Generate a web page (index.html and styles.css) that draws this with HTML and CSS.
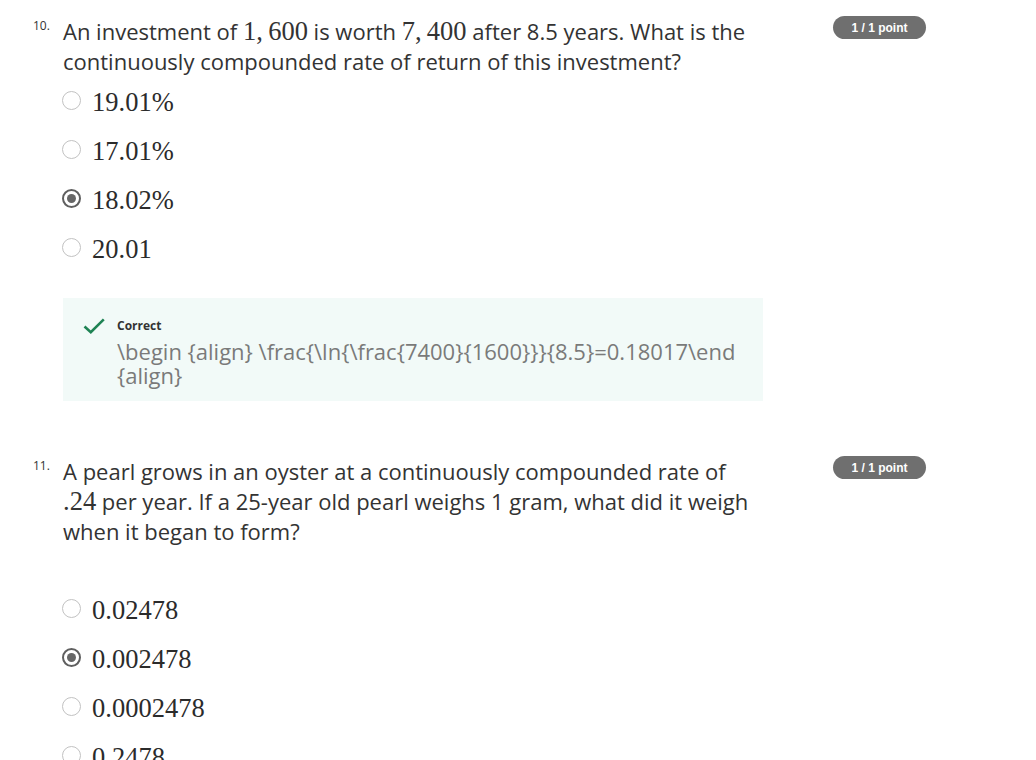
FILE: index.html
```html
<!DOCTYPE html>
<html lang="en">
<head>
<meta charset="utf-8">
<title>Quiz</title>
<link rel="stylesheet" href="styles.css">
</head>
<body>
<main class="page">
  <section class="question">
    <div class="qnum">10.</div>
    <div class="qbody">
      <p class="prompt">An investment of <span class="math">1,&thinsp;600</span> is worth <span class="math">7,&thinsp;400</span> after 8.5 years. What is the continuously compounded rate of return of this investment?</p>
      <ul class="options">
        <li class="option"><span class="radio"></span><span class="math opt">19.01%</span></li>
        <li class="option"><span class="radio"></span><span class="math opt">17.01%</span></li>
        <li class="option"><span class="radio radio--checked"></span><span class="math opt">18.02%</span></li>
        <li class="option"><span class="radio"></span><span class="math opt">20.01</span></li>
      </ul>
      <div class="feedback">
        <svg class="check" width="22" height="16" viewBox="0 0 22 16" aria-hidden="true"><path d="M1.5 8.5 L7.8 14.2 L20.8 1.4" fill="none" stroke="#1f8354" stroke-width="2.6"/></svg>
        <div class="feedback-body">
          <div class="feedback-title">Correct</div>
          <div class="feedback-text">\begin {align} \frac{\ln{\frac{7400}{1600}}}{8.5}=0.18017\end<br>{align}</div>
        </div>
      </div>
    </div>
    <div class="badge">1 / 1 point</div>
  </section>

  <section class="question">
    <div class="qnum">11.</div>
    <div class="qbody">
      <p class="prompt">A pearl grows in an oyster at a continuously compounded rate of <span class="math">.24</span> per year. If a 25-year old pearl weighs 1 gram, what did it weigh when it began to form?</p>
      <ul class="options options--spaced">
        <li class="option"><span class="radio"></span><span class="math opt">0.02478</span></li>
        <li class="option"><span class="radio radio--checked"></span><span class="math opt">0.002478</span></li>
        <li class="option"><span class="radio"></span><span class="math opt">0.0002478</span></li>
        <li class="option"><span class="radio"></span><span class="math opt">0.2478</span></li>
      </ul>
    </div>
    <div class="badge">1 / 1 point</div>
  </section>
</main>
</body>
</html>
```
FILE: styles.css
```css
* { box-sizing: border-box; }

html, body {
  margin: 0;
  padding: 0;
  background: #ffffff;
}

body {
  font-family: "Open Sans", "Liberation Sans", sans-serif;
  color: #333333;
  overflow: hidden;
}

.page {
  padding: 16px 0 0 33px;
  display: flex;
  flex-direction: column;
  gap: 55px;
}

.question {
  display: flex;
  align-items: flex-start;
}

.qnum {
  width: 30px;
  flex: none;
  font-size: 12px;
  line-height: 18px;
  padding-top: 1px;
  color: #333;
}

.qbody {
  width: 700px;
  flex: none;
}

.prompt {
  margin: 0;
  font-size: 22px;
  line-height: 30px;
  color: #333;
}

.math {
  font-family: "Liberation Serif", "Times New Roman", serif;
  font-size: 26.5px;
  line-height: 1;
}

.options {
  list-style: none;
  margin: 0;
  padding: 0;
}

.options--spaced {
  margin-top: 38px;
}

.option {
  height: 49px;
  display: flex;
  align-items: center;
  gap: 11px;
  color: #2b2b2b;
}

.option .opt {
  line-height: 30px;
  padding-top: 3px;
}

.radio {
  width: 19px;
  height: 19px;
  border-radius: 50%;
  border: 1.6px solid #c2c2c2;
  background: #fff;
  flex: none;
  margin-left: -1px;
  position: relative;
}

.radio--checked {
  border: 2px solid #5f5f5f;
}

.radio--checked::after {
  content: "";
  position: absolute;
  left: 50%;
  top: 50%;
  width: 9px;
  height: 9px;
  margin: -4.5px 0 0 -4.5px;
  border-radius: 50%;
  background: #666;
}

.feedback {
  margin-top: 26px;
  background: #f2faf8;
  padding: 20px 20px 14px 20px;
  display: flex;
  gap: 12px;
  align-items: flex-start;
}

.check {
  flex: none;
  margin-top: 0;
}

.feedback-title {
  font-size: 12px;
  font-weight: 700;
  line-height: 16px;
  color: #333;
}

.feedback-text {
  margin-top: 5px;
  font-size: 22px;
  line-height: 24px;
  color: #7a7a7a;
}

.badge {
  margin-left: 70px;
  flex: none;
  width: 93px;
  height: 23px;
  border-radius: 12px;
  background: #6f6f6f;
  color: #ffffff;
  font-family: "Liberation Sans", Arial, sans-serif;
  font-weight: 700;
  font-size: 12px;
  display: flex;
  align-items: center;
  justify-content: center;
}
```
